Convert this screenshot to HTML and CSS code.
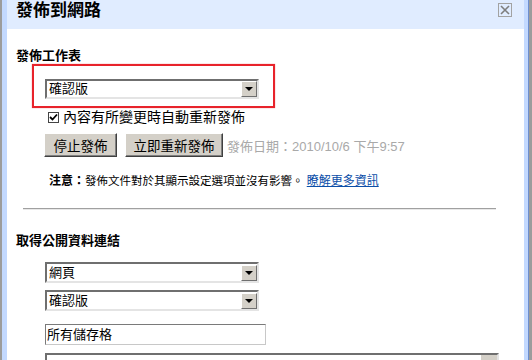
FILE: index.html
```html
<!DOCTYPE html>
<html lang="zh-Hant">

<head>
 <meta charset="UTF-8">
 <meta name="viewport" content="width=device-width, initial-scale=1.0">
 <title>發佈到網路</title>
<link rel="stylesheet" href="styles.css">
</head>

<body>

 <div class="dialog">
  <div class="titlebar">
   <span class="title">發佈到網路</span>
   <span class="close">
    <svg width="12" height="12" viewBox="0 0 12 12">
     <path d="M2 2 L10 10 M10 2 L2 10" stroke="#7d7d7d" stroke-width="1.6" fill="none"/>
    </svg>
   </span>
  </div>

  <div class="content">
   <h2 class="heading">發佈工作表</h2>

   <div class="highlight">
    <div class="select">
     <span class="select-text">確認版</span>
     <span class="select-btn"><span class="arrow"></span></span>
    </div>
   </div>

   <div class="check-row">
    <span class="checkbox">
     <svg width="9" height="9" viewBox="0 0 9 9">
      <path d="M1 4 L3.5 6.5 L8 1.5" stroke="#000" stroke-width="1.8" fill="none"/>
     </svg>
    </span>
    <span>內容有所變更時自動重新發佈</span>
   </div>

   <div class="button-row">
    <button type="button" class="btn btn-stop">停止發佈</button>
    <button type="button" class="btn btn-republish">立即重新發佈</button>
    <span class="date">發佈日期：2010/10/6 下午9:57</span>
   </div>

   <p class="note"><b>注意：</b>發佈文件對於其顯示設定選項並沒有影響。 <a href="#">瞭解更多資訊</a></p>

   <div class="divider"></div>

   <h2 class="heading heading-links">取得公開資料連結</h2>

   <div class="links">
    <div class="select">
     <span class="select-text">網頁</span>
     <span class="select-btn"><span class="arrow"></span></span>
    </div>
    <div class="select">
     <span class="select-text">確認版</span>
     <span class="select-btn"><span class="arrow"></span></span>
    </div>
    <div class="text-input">所有儲存格</div>
    <div class="link-box">
     <span class="scroll-part"></span>
    </div>
   </div>
  </div>
 </div>

</body>

</html>
```

FILE: styles.css
```css
 body {
  margin: 0;
  height: 360px;
  overflow: hidden;
  background-color: #9c9c9c;
  font-family: "Liberation Sans", "Noto Sans CJK TC", sans-serif;
  color: #000;
 }

 .dialog {
  margin: 0 4px 0 2px;
  height: 360px;
  overflow: hidden;
  background-color: #fff;
  border-left: 5px solid #c3d9ff;
  border-right: 4px solid #c3d9ff;
  box-shadow: 1px 0 0 #6e8fcf;
 }

 .titlebar {
  height: 29px;
  background-color: #e0ecff;
  display: flex;
  align-items: flex-start;
  justify-content: space-between;
  padding: 0 12px 0 9px;
 }

 .title {
  font-size: 17px;
  font-weight: bold;
  line-height: 22px;
 }

 .close {
  margin-top: 3px;
  width: 12px;
  height: 12px;
  border: 1px solid #a2a2a2;
  display: flex;
  align-items: center;
  justify-content: center;
 }

 .content {
  padding: 19px 0 0 9px;
 }

 .heading {
  margin: 0;
  font-size: 13px;
  line-height: 16px;
  font-weight: bold;
 }

 .highlight {
  box-sizing: border-box;
  width: 243px;
  height: 44px;
  margin-left: 16px;
  padding: 13px 0 0 11px;
  border: 2px solid #e8232b;
  box-shadow: 0 0 1px rgba(232, 35, 43, 0.6);
 }

 .select {
  box-sizing: border-box;
  width: 214px;
  height: 20px;
  background-color: #fff;
  border: 2px solid;
  border-color: #6f6f6f #e4e4e4 #e4e4e4 #6f6f6f;
  display: flex;
  align-items: center;
  justify-content: space-between;
 }

 .select-text {
  font-size: 13px;
  line-height: 16px;
  padding-left: 2px;
 }

 .select-btn {
  box-sizing: border-box;
  width: 16px;
  height: 16px;
  background-color: #d4d0c8;
  border: 1px solid;
  border-color: #fff #6f6f6f #6f6f6f #fff;
  display: flex;
  align-items: center;
  justify-content: center;
 }

 .arrow {
  width: 0;
  height: 0;
  border-left: 4px solid transparent;
  border-right: 4px solid transparent;
  border-top: 4px solid #000;
 }

 .check-row {
  margin: 2px 0 0 32px;
  display: flex;
  align-items: center;
  gap: 4px;
  font-size: 14px;
  line-height: 14px;
 }

 .checkbox {
  box-sizing: border-box;
  width: 11px;
  height: 11px;
  border: 1px solid #444;
  display: flex;
  align-items: center;
  justify-content: center;
 }

 .button-row {
  margin: 9px 0 0 28px;
  display: flex;
  align-items: center;
 }

 .btn {
  box-sizing: border-box;
  height: 24px;
  padding: 0;
  background-color: #d4d0c8;
  border: 1px solid;
  border-color: #fff #404040 #404040 #fff;
  box-shadow: inset -1px -1px 0 #808080;
  font-family: "Noto Sans CJK TC", sans-serif;
  font-size: 13.5px;
  color: #000;
 }

 .btn-stop {
  width: 73px;
  margin-right: 8px;
 }

 .btn-republish {
  width: 98px;
  margin-right: 4px;
 }

 .date {
  font-size: 13px;
  color: #a9a9a9;
 }

 .note {
  margin: 16px 0 0 33px;
  font-size: 11.5px;
  line-height: 16px;
 }

 .note b {
  font-size: 12px;
 }

 .note a {
  color: #0b4ea8;
  font-size: 12px;
 }

 .divider {
  width: 473px;
  margin: 19px 0 0 7px;
  border-top: 1px solid #a0a0a0;
  border-bottom: 1px solid #e8e8e8;
 }

 .heading-links {
  margin-top: 23px;
 }

 .links {
  margin: 13px 0 0 29px;
 }

 .links .select {
  height: 21px;
  margin-bottom: 7px;
 }

 .links .select + .select {
  margin-bottom: 13px;
 }

 .text-input {
  box-sizing: border-box;
  width: 221px;
  height: 21px;
  border: 1px solid;
  border-color: #7a7a7a #c8c8c8 #c8c8c8 #7a7a7a;
  font-size: 13px;
  line-height: 19px;
  padding-left: 1px;
 }

 .link-box {
  box-sizing: border-box;
  width: 454px;
  height: 7px;
  margin-top: 8px;
  border: 2px solid;
  border-bottom: none;
  border-color: #6f6f6f #e4e4e4 #e4e4e4 #6f6f6f;
  display: flex;
  justify-content: flex-end;
 }

 .scroll-part {
  width: 16px;
  background-color: #d4d0c8;
  border-left: 1px solid #fff;
 }
```
